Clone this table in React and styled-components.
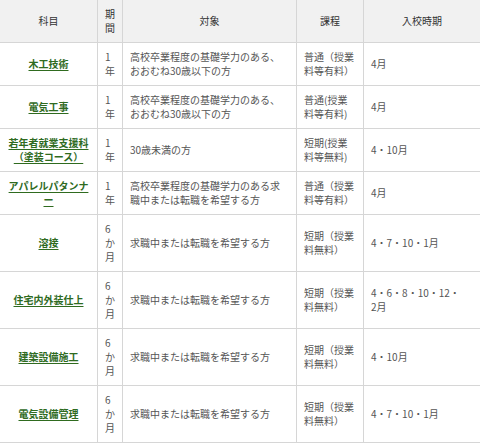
import React from "react";
import styled, { createGlobalStyle } from "styled-components";

const Global = createGlobalStyle`
  html, body { margin: 0; padding: 0; background: #fff; }
  body {
    font-family: "Noto Sans CJK JP", "Noto Sans", sans-serif;
    font-size: 10px;
    line-height: 14px;
    color: #555;
  }
`;

const Table = styled.div`
  width: 480px;
  overflow: hidden;
`;

const Row = styled.div`
  display: grid;
  grid-template-columns: 98px 25px 174px 67px 116px;
  border-bottom: 1px solid #d6d6d6;
  background: ${(p) => (p.$head ? "#f1f1f1" : "#fff")};
`;

const Cell = styled.div`
  display: flex;
  flex-direction: column;
  justify-content: center;
  padding: 7px 7px;
  min-width: 0;
  text-align: ${(p) => p.$align || "left"};
  border-right: 1px solid #d6d6d6;
  color: ${(p) => (p.$head ? "#333" : "#555")};
  word-break: break-all;
  &:last-child { border-right: none; }
`;

const CourseLink = styled.a`
  color: #2f6b1f;
  font-weight: bold;
  text-decoration: underline;
  text-underline-offset: 2px;
`;

const NoWrap = styled.span`
  white-space: nowrap;
`;

const rows = [
  ["木工技術", "1年", "高校卒業程度の基礎学力のある、おおむね30歳以下の方", "普通（授業料等有料）", "4月"],
  ["電気工事", "1年", "高校卒業程度の基礎学力のある、おおむね30歳以下の方", "普通(授業料等有料)", "4月"],
  ["若年者就業支援科（塗装コース）", "1年", "30歳未満の方", "短期(授業料等無料)", "4・10月"],
  ["アパレルパタンナー", "1年", "高校卒業程度の基礎学力のある求職中または転職を希望する方", "普通（授業料等有料）", "4月"],
  ["溶接", "6か月", "求職中または転職を希望する方", "短期（授業料無料）", "4・7・10・1月"],
  ["住宅内外装仕上", "6か月", "求職中または転職を希望する方", "短期（授業料無料）", <>4・6・8・10・12・<NoWrap>2月</NoWrap></>],
  ["建築設備施工", "6か月", "求職中または転職を希望する方", "短期（授業料無料）", "4・10月"],
  ["電気設備管理", "6か月", "求職中または転職を希望する方", "短期（授業料無料）", "4・7・10・1月"],
];

export default function App() {
  return (
    <>
      <Global />
      <Table>
        <Row $head>
          <Cell $head $align="center">科目</Cell>
          <Cell $head>期間</Cell>
          <Cell $head $align="center">対象</Cell>
          <Cell $head $align="center">課程</Cell>
          <Cell $head $align="center">入校時期</Cell>
        </Row>
        {rows.map((r, i) => (
          <Row key={i}>
            <Cell $align="center">
              <div><CourseLink href="#">{r[0]}</CourseLink></div>
            </Cell>
            <Cell>{r[1]}</Cell>
            <Cell>{r[2]}</Cell>
            <Cell>{r[3]}</Cell>
            <Cell>{r[4]}</Cell>
          </Row>
        ))}
      </Table>
    </>
  );
}
